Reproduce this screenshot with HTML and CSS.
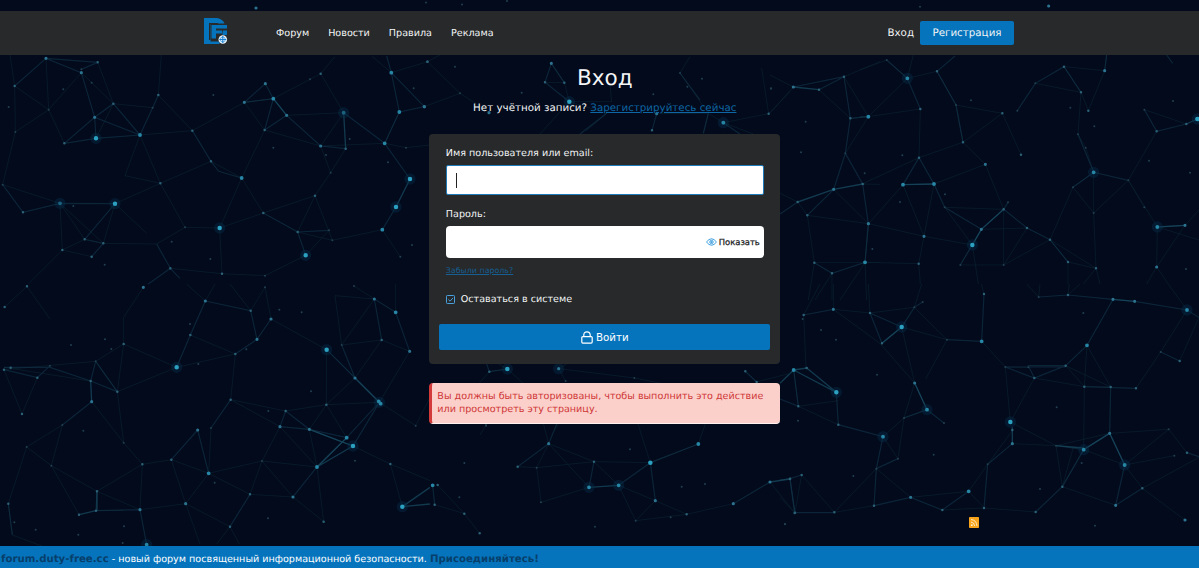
FILE: index.html
```html
<!DOCTYPE html>
<html lang="ru">
<head>
<meta charset="utf-8">
<title>Вход</title>
<link rel="stylesheet" href="styles.css">
</head>
<body>
<svg class="network" viewBox="0 0 1199 568" aria-hidden="true">
  <g transform="scale(.33333)">
    <path class="edge faint" d="M30 165L44 258L46 396L8 554M46 396L146 329L138 175M146 329L244 218M146 329L193 430M44 258L146 329M244 218L340 311L293 187M340 311L458 323M340 311L288 415M475 285L577 392L733 307M484 165L475 285M420 405L577 392M420 405L375 527L481 550L420 405M481 550L633 484M481 550L555 682L470 732L310 730M555 682L659 684L790 639M659 684L725 534L790 639M659 684L666 821M725 534L794 390L733 307M794 390L962 438M733 307L820 296L962 221L1031 338L860 346M962 221L1005 170M1031 338L962 438L992 518L945 587L893 696M945 587L997 721L893 696M790 639L945 587M962 438L1154 430L1198 336M1154 430L1218 443L1290 435M1037 446L992 518M1174 218L1283 185M1174 218L1115 168M1147 689L1201 770M997 721L1147 689M917 766L987 691M917 766L795 827L666 821L511 805M180 610L187 750L85 852M187 750L275 770M187 750L254 718L180 610L310 730L345 611M345 611L481 550M8 554L180 610M345 611L440 700M725 534L633 484"/>
    <path class="edge" d="M44 258L138 175L244 218L284 352L420 405L340 311L284 352L193 430M138 175L293 187L244 208M180 610L345 611L254 718L310 730L275 770M8 554L69 637L180 610M193 430L288 415L420 405L458 323L475 285M284 352L288 415M577 392L633 484L656 514L725 534M733 307L796 251L820 296L860 346L962 438L1037 446M733 307L820 296L794 390L860 346M1031 338L1154 430M790 639L893 696L917 766M893 696L987 691M470 732L511 805L445 852M511 805L540 835M1160 168L1174 218L1198 336L1154 430L1230 537M1198 336L1273 320L1174 218M1147 689L1188 621"/>
    <path class="edge bright" d="M820 296L860 346M1031 338L1037 446M1230 537L1188 621"/>
    <path class="node dim" d="M26 321h0M190 268h0M458 323h0M275 248h0M244 208h0M146 329h0M46 396h0M220 618h0M515 725h0M631 777h0M314 794h0M820 443h0M930 238h0M1049 417h0M1164 487h0M1241 265h0M1236 735h0M978 465h0M8 554h0M555 682h0M987 691h0M997 721h0M795 827h0M1201 770h0M992 518h0M1218 443h0M640 285h0"/>
    <path class="node small" d="M44 258h0M293 187h0M340 311h0M193 430h0M475 285h0M577 392h0M633 484h0M481 550h0M69 637h0M254 718h0M310 730h0M187 750h0M275 770h0M511 805h0M666 821h0M790 639h0M893 696h0M945 587h0M794 390h0M962 221h0M1037 446h0M1283 185h0"/>
    <path class="node medium" d="M138 175h0M244 218h0M284 352h0M796 251h0M860 346h0M962 438h0M768 24h0M1273 320h0M733 307h0"/>
    <path class="node large" d="M180 610h0M420 405h0M725 534h0M820 296h0M1031 338h0M1174 218h0M1198 336h0M1154 430h0M1147 689h0"/>
    <path class="halo" d="M180 610h0M288 415h0M345 611h0M659 684h0M917 766h0M1031 338h0M1230 537h0M1188 621h0"/>
    <path class="node huge" d="M288 415h0M345 611h0M659 684h0M917 766h0M1230 537h0M1188 621h0"/>
  </g>
  <g transform="translate(860 0) scale(.33333)">
    <path class="edge faint" d="M80 180L0 210M80 180L142 235L160 165M142 235L25 350L181 327L177 473L0 555M231 214L288 315L309 427L177 473M231 214L142 235M288 315L427 340L483 464M309 427L376 493L222 552M376 493L431 628M427 340L309 427M526 250L663 277L685 332M612 200L663 277L654 403M612 200L734 212L740 165M734 212L685 332M654 403L677 443L701 517L639 562L701 639L805 541M639 562L570 719M701 517L701 639L708 805M570 719L708 805M853 329L979 372M890 394L805 541L892 681L890 801L975 676L1017 630M805 541L853 622M129 554L26 671L15 787L176 791L192 709L129 554M222 552L192 709L337 735L364 688M254 622L337 735L301 795L431 795L501 684M431 628L431 795L570 719L624 786L708 805L670 852M624 786V852M708 805L720 852M501 684L364 688M26 671L192 709M892 681L1017 720M890 801L860 852M890 801L925 852M337 735L355 852M254 622L431 628M176 791L181 852"/>
    <path class="edge" d="M80 180L142 235L181 327M231 214L285 168M231 214L288 315L309 427M472 332L526 250L612 200L663 277M740 165L734 212M654 403L701 517L805 541M701 517L639 562M853 329L890 394L979 372M920 165L938 190M177 473L129 554L222 552L254 622L364 688L301 795M177 473L222 552M364 688L431 628L501 684L570 719L624 786M444 607L431 628M892 681L975 676M25 350H0"/>
    <path class="edge bright" d="M129 554L222 552M979 372L1012 357M337 735L364 688L431 628M892 681L975 676"/>
    <path class="node dim" d="M180 20h0M333 301h0M631 323h0M703 379h0M939 303h0M867 482h0M990 518h0M255 583h0M120 606h0M80 180h0M472 332h0M526 250h0M654 403h0M677 443h0M639 562h0M805 541h0M853 329h0M254 622h0M444 607h0M288 315h0M431 795h0M301 795h0M701 639h0M127 466h0M853 622h0M978 807h0M10 552h0"/>
    <path class="node small" d="M231 214h0M181 327h0M427 340h0M309 427h0M177 473h0M612 200h0M663 277h0M685 332h0M483 464h0M890 394h0M501 684h0M570 719h0M624 786h0M708 805h0M176 791h0M26 671h0M431 628h0M979 372h0"/>
    <path class="node medium" d="M25 350h0M376 493h0M734 212h0M364 688h0M192 709h0M15 787h0M975 676h0M890 801h0M566 18h0"/>
    <path class="halo" d="M142 235h0M337 735h0M892 681h0M701 517h0M1012 357h0"/>
    <path class="node large" d="M142 235h0M129 554h0M222 552h0M701 517h0M892 681h0"/>
    <path class="node huge" d="M337 735h0M1012 357h0"/>
  </g>
  <g transform="translate(0 284) scale(.33333)">
    <path class="edge faint" d="M81 7L150 105M81 7L14 69M430 10L371 100V180L530 250L352 323L287 232L12 257L66 390L112 281M287 232L371 180M352 323L371 476L427 541L291 622M275 353L371 476M187 423L154 545L237 692M187 423L80 489L25 659L37 753L125 786M80 489L154 545L291 622L420 677L427 541L514 527M514 527L557 659L600 780M557 659L626 568L786 531L840 428M557 659L420 677M557 659L690 728L650 780M690 728L718 780M514 527L626 568L750 631L879 639L971 713L951 549L786 531L750 631M786 531L879 639M840 428L951 549L928 436L1059 486L1171 540L1290 590M1171 540L1207 668M979 362L928 436M979 362L1040 461M979 362L1138 355L1247 425L1290 340M692 347L857 381L979 362L1065 282M692 347L840 428M692 347L706 210L530 250M706 210L571 153M371 180L352 323M633 432L626 568M813 105L980 197L979 362M980 197L1065 282L1145 168L1229 202L1138 355M1025 183L1145 168M1025 183L1005 35L1123 45M1025 183L1123 45M1187 85V0M616 51L645 0M616 51L560 0M752 80L690 0M752 80L795 10L813 105M1062 6L1123 45M272 291L12 250M288 680L370 680"/>
    <path class="edge" d="M616 51L571 153L530 250M616 51L752 80L771 166L813 105M771 166L706 210M692 347L633 432M593 438L514 527M593 438L626 568M12 250H150L272 291L352 323M12 257L112 281L150 245M287 232L272 291M287 232L352 323M275 353L187 423M840 428L857 381L928 436L1040 461L1138 355L1065 282L980 197M1065 282L1025 183M951 549L1040 461M1123 45L1187 85L1229 202M1123 45L1145 168M840 428L928 436L1059 486L1138 355M951 549L879 639M690 728L750 631M291 622L288 680M288 680L420 677L440 782M25 659L37 753"/>
    <path class="edge bright" d="M275 353L272 291M951 549L1059 486M1040 461L951 549M1207 668L1290 610M1207 668L1290 660M237 692L288 680M291 622V680M928 436L1059 486M1138 355L1065 282"/>
    <path class="node dim" d="M213 183h0M315 166h0M334 195h0M595 240h0M739 196h0M838 77h0M570 120h0M905 85h0M107 737h0M43 715h0M235 752h0M368 777h0M372 727h0M804 703h0M644 596h0M805 381h0M1065 530h0M187 423h0M154 545h0M80 489h0M371 476h0M633 432h0M786 531h0M1062 6h0M1247 425h0M1025 183h0M150 245h0M287 232h0M933 322h0M250 440h0M795 10h0"/>
    <path class="node small" d="M81 7h0M14 69h0M12 257h0M32 251h0M112 281h0M66 390h0M371 180h0M272 291h0M352 323h0M571 153h0M706 210h0M752 80h0M692 347h0M514 527h0M427 541h0M291 622h0M288 680h0M237 692h0M25 659h0M690 728h0M750 631h0M857 381h0M979 362h0M971 713h0M1145 168h0M1171 540h0"/>
    <path class="node medium" d="M430 10h0M616 51h0M813 105h0M771 166h0M275 353h0M593 438h0M420 677h0M557 659h0M879 639h0M928 436h0M840 428h0M1065 282h0M1123 45h0M1229 202h0"/>
    <path class="halo" d="M530 250h0M980 197h0M1059 486h0M1138 355h0M1207 668h0M440 782h0"/>
    <path class="node large" d="M626 568h0M951 549h0M1040 461h0M1136 352h0M1142 359h0M1187 85h0M440 782h0"/>
    <path class="node huge" d="M530 250h0M980 197h0M1059 486h0M1207 668h0"/>
  </g>
  <g transform="translate(780 284) scale(.33333)">
    <path class="edge faint" d="M160 76V0M160 76L270 87L265 0M71 93L120 0M71 93L78 250M160 76L300 178L404 297M270 87L403 70L425 0M403 70L501 167L437 285M365 129L501 167M365 129L404 297L372 402L309 458M605 172L676 249L691 414L763 282M604 0L612 30M676 249L745 250M776 39L780 0M776 39L740 0M864 33L868 0M864 33L900 0M1165 0L1221 78L1142 204M1199 231L1257 100M1142 204L1068 313M921 184L913 308L857 245L992 309L921 184M992 309L913 308L911 497M763 282L913 308M691 414L828 485M697 479L828 485L847 608M880 490L847 608L911 497L1034 543L1087 613L1257 520M1034 543L1183 515M989 448L1166 436L1221 506M989 448L828 485M847 608L1007 664M1087 613L1215 708M1034 543L1166 436M566 622L392 640M566 622L623 541L697 440M566 622L612 672L767 684M487 678L612 672M289 554L163 685L65 573L45 686L0 640M289 554L392 640M372 402L354 524L309 458M372 402L441 377M41 258L55 367L175 350M55 367L175 422M163 685L282 665"/>
    <path class="edge" d="M71 93L160 76M270 87L365 129M428 54L403 70L365 129L306 178L270 87M501 167L605 172L612 30M676 249L763 282L857 245H745L763 282M676 249H857M857 245L921 184L999 46L1064 52L1221 78L1257 100M776 39L864 33L999 46M1142 204L1199 231M913 308L1068 313M992 309L989 448L1034 543L1007 664L1087 613M169 325L175 422L309 458L289 554L282 665L392 640L487 678L566 622M354 524L289 554M372 402L441 377L492 417M404 297L441 377M612 672L623 541L697 479M767 684L847 608L911 497M45 686H163M0 588L30 584L65 573M30 584L45 686M41 258L55 367L0 345M989 448L911 497L828 485M1221 506L1257 518"/>
    <path class="edge bright" d="M365 129L306 178M0 298L41 258L80 252L169 325M41 258L169 325M404 297L441 377M697 479V430M911 497L989 448L1034 543M828 485L911 492M999 46L1064 52"/>
    <path class="node dim" d="M68 105h0M123 138h0M168 167h0M910 87h0M54 410h0M220 576h0M830 370h0M1183 515h0M461 512h0M372 402h0M354 524h0M492 417h0M289 554h0M623 541h0M428 54h0M403 70h0M501 167h0M676 249h0M745 250h0M776 39h0M1142 204h0M1166 436h0M291 272h0M15 720h0M945 725h0M905 537h0M780 615h0M828 485h0"/>
    <path class="node small" d="M71 93h0M270 87h0M306 178h0M612 30h0M864 33h0M763 282h0M857 245h0M913 308h0M992 309h0M1068 313h0M1199 231h0M80 252h0M55 367h0M175 422h0M65 573h0M30 584h0M45 686h0M163 685h0M282 665h0M487 678h0M612 672h0M767 684h0M847 608h0M1087 613h0M1221 506h0M697 438h0"/>
    <path class="node medium" d="M160 76h0M404 297h0M392 640h0M1064 52h0M999 46h0M989 448h0M697 479h0M1007 664h0M1215 708h0"/>
    <path class="halo" d="M365 129h0M169 325h0M309 458h0M441 377h0M691 414h0M1221 78h0M1034 543h0M911 497h0"/>
    <path class="node large" d="M605 172h0M921 184h0M41 258h0M441 377h0M309 458h0M566 622h0M911 497h0M1034 543h0M1221 78h0"/>
    <path class="node huge" d="M365 129h0M169 325h0M691 414h0"/>
  </g>
  <g transform="translate(430 420) scale(.33333)">
    <path class="edge faint" d="M340 10L356 71L320 143L333 247L477 202M356 71L492 125L661 128L620 0M492 125L566 196L676 242L770 283L910 251M566 196L617 302L770 283M617 302L676 242M320 143L492 125M263 140L320 143M356 71L477 202M661 128L805 72L830 0M23 195L103 281L149 340M14 254L103 281M1094 279L1020 186"/>
    <path class="edge" d="M385 0L356 71L263 140M492 125L477 202M566 196L661 128L676 242M661 128L805 72M910 251L1020 186M8 196L14 254M1080 177L1094 279"/>
    <path class="edge bright" d="M477 202L566 196M1020 186L1080 177"/>
    <path class="node dim" d="M168 15h0M103 129h0M88 232h0M825 192h0M755 200h0M600 88h0M1065 313h0M320 143h0M333 247h0M617 302h0M722 292h0M495 320h0"/>
    <path class="node small" d="M263 140h0M492 125h0M770 283h0M103 281h0M149 340h0M14 254h0M23 195h0M1080 177h0M1094 279h0"/>
    <path class="node medium" d="M356 71h0M676 242h0M910 251h0M1020 186h0"/>
    <path class="halo" d="M477 202h0M566 196h0"/>
    <path class="node large" d="M477 202h0M566 196h0M805 72h0M8 196h0"/>
    <path class="node huge" d="M661 128h0"/>
  </g>
  <g transform="translate(420 55) scale(.33333)">
    <path class="edge faint" d="M22 20L120 115L205 170M120 115L13 155M22 20L60 0M394 25L433 83L448 140M375 82L433 83M448 140L575 140L570 90M448 140L560 175L498 228M448 140L360 237M780 54L865 175L850 235M780 54L810 5M865 175L910 203L1046 176L1110 110M1046 176L1025 40M910 203L1000 237M710 176L865 175"/>
    <path class="edge" d="M394 25L375 82L448 140M394 25L433 83M710 176L696 226M865 175L850 235M780 54L840 135M560 175L480 237M910 203L960 237"/>
    <path class="node dim" d="M105 35h0M305 113h0M846 71h0M700 118h0M1053 100h0M780 54h0M120 115h0M802 95h0"/>
    <path class="node small" d="M22 20h0M375 82h0M433 83h0M696 226h0M1046 176h0"/>
    <path class="halo" d="M448 140h0M910 203h0"/>
    <path class="node medium" d="M13 155h0M394 25h0M710 176h0M207 173h0"/>
    <path class="node large" d="M910 203h0"/><path class="node huge" d="M448 140h0"/>
  </g>
  <g transform="translate(770 50) scale(.33333)">
    <path class="edge faint" d="M70 111L0 75M70 111L0 190M222 80L330 35M147 119L241 205L295 200L222 80M295 200L226 310M191 418L295 521L285 637L330 637M112 496L133 638L115 750M133 638H285L210 750M186 670V750M186 670L135 750M278 402L330 403M83 456L30 430M83 456L112 496L295 521M285 637L290 750"/>
    <path class="edge" d="M222 80L241 205L226 310L191 418L112 496M226 310L278 402L295 521L285 637L186 670L133 638M147 119L222 80L70 111M83 456L30 492M241 205L295 200"/>
    <path class="edge bright" d="M70 111L147 119M83 456L191 418L278 402"/>
    <path class="node dim" d="M93 307h0M284 370h0M307 597h0M107 215h0M3 116h0M226 310h0"/>
    <path class="node small" d="M222 80h0M147 119h0M241 205h0M278 402h0M83 456h0M112 496h0M133 638h0M186 670h0"/>
    <path class="node medium" d="M70 111h0M191 418h0M295 521h0"/>
    <path class="node large" d="M295 200h0M285 637h0"/>
  </g>
  <g transform="translate(420 310) scale(.33333)">
    <path class="edge faint" d="M262 177L208 185M208 185L160 240M262 177L310 220M416 176L643 204L800 235M416 176L440 162M976 184L1010 216L1110 190M262 177L235 162M416 176L437 213M415 342L395 375M198 345L180 375"/>
    <path class="edge" d="M208 185L262 177M976 184L1010 216M208 185L200 162"/>
    <path class="node dim" d="M437 213h0M198 347h0M643 204h0"/>
    <path class="node small" d="M208 185h0M976 184h0M1010 216h0"/>
    <path class="halo" d="M262 177h0M416 176h0"/>
    <path class="node medium" d="M416 176h0"/><path class="node huge" d="M262 177h0"/>
  </g>
  <path class="node dim thin" d="M426 2.500h0M462 4.500h0M507 1h0"/>
</svg>

<div class="page">
  <header class="header">
    <a class="logo" href="#">
      <svg viewBox="0 0 24 27" width="24" height="27">
        <path fill="#0674bd" d="M0 0H13Q19 1 20.500 5.500H6.500V23.500H15.500V26H0Z"/>
        <path fill="#0674bd" d="M7.500 7H23V10.500H12V12.500H18V15.500H12V20.500H7.500Z"/>
        <path fill="#0674bd" d="M19 12.500H23V17H18.500V14Z"/>
        <path fill="#27292a" d="M5 5H14V6.300H6.300V22H5Z"/>
        <circle cx="18.800" cy="21.500" r="4.300" fill="#e6f2fb"/>
        <circle cx="18.800" cy="21.500" r="2.500" fill="none" stroke="#4ba4e4" stroke-width=".9"/>
        <path d="M18.800 18v7M15.300 21.500h7" stroke="#187fd0" stroke-width="1.100"/>
      </svg>
    </a>
    <nav class="nav"><a href="#">Форум</a><a href="#">Новости</a><a href="#">Правила</a><a href="#">Реклама</a></nav>
    <div class="account"><a class="sign-in" href="#">Вход</a><a class="register" href="#">Регистрация</a></div>
  </header>

  <main class="main">
    <h1 class="title">Вход</h1>
    <p class="subtitle">Нет учётной записи? <a class="link" href="#">Зарегистрируйтесь сейчас</a></p>
    <form class="card">
      <div class="fields">
        <label class="label">Имя пользователя или email:</label>
        <div class="input focused"><span class="caret"></span></div>
        <label class="label">Пароль:</label>
        <div class="input password">
          <svg viewBox="0 0 11 8" width="11" height="8" fill="none" stroke="#3d9fe0"><path d="M.5 4Q5.500-2.500 10.500 4Q5.500 10.500 .5 4Z"/><circle cx="5.500" cy="4" r="1.700"/><circle cx="5.500" cy="4" r=".6" fill="#3d9fe0"/></svg>
          <span class="show">Показать</span>
        </div>
        <a class="link forgot" href="#">Забыли пароль?</a>
        <div class="remember">
          <svg viewBox="0 0 9 9" width="9" height="9" fill="none" stroke="#48a0dc"><rect x=".5" y=".5" width="8" height="8" rx=".8"/><path d="M2.300 4.500L4 6.200L7 2.900"/></svg>
          <span>Оставаться в системе</span>
        </div>
      </div>
      <button class="submit" type="button">
        <svg viewBox="0 0 12 13" width="12" height="13" fill="none" stroke="#fff" stroke-width="1.200"><rect x=".8" y="5.600" width="10.400" height="6.500" rx="1"/><path d="M2.800 5.500V4Q2.800 .8 6 .8T9.200 4V5.500"/></svg>
        <span>Войти</span>
      </button>
    </form>
    <div class="alert">Вы должны быть авторизованы, чтобы выполнить это действие<br>или просмотреть эту страницу.</div>
  </main>

  <footer class="footer">
    <a class="rss" href="#"><svg viewBox="0 0 10 11" width="10" height="11"><rect width="10" height="11" rx=".7" fill="#f7a31c"/><g fill="none" stroke="#fff3d6" stroke-width=".9"><path d="M2 2.500Q7.500 3 8 9M2 5Q5.200 5.500 5.700 9"/></g><circle cx="2.800" cy="8.200" r=".9" fill="#fff3d6"/></svg></a>
  </footer>
  <div class="notice"><a href="#">forum.duty-free.cc</a> <span>- новый форум посвященный информационной безопасности.</span> <a href="#">Присоединяйтесь!</a></div>
</div>
</body>
</html>
```
FILE: styles.css
```css
* { box-sizing: border-box; }
body {
  margin: 0;
  background: #020a1c;
  color: #f4f5f6;
  font-family: "DejaVu Sans", sans-serif;
  font-size: 9.6px;
  text-rendering: geometricPrecision;
  overflow: hidden;
}
a { color: inherit; text-decoration: none; }
svg { display: block; flex: none; }

.network { position: absolute; top: 0; left: 0; width: 1199px; height: 568px; }
.edge { fill: none; stroke: #14354a; stroke-width: 3.6; opacity: .62; }
.edge.faint { stroke: #0b2230; stroke-width: 3; opacity: .65; }
.edge.bright { stroke: #1b5368; stroke-width: 4; opacity: .65; }
.node { fill: none; stroke: #2b6076; stroke-width: 7.500; stroke-linecap: round; }
.node.dim { stroke: #213f50; stroke-width: 6; }
.node.medium { stroke: #2c7390; stroke-width: 9.500; }
.node.large { stroke: #2786a5; stroke-width: 11.5; }
.node.huge { stroke: #2ba0c0; stroke-width: 13.5; }
.node.dim.thin { stroke-width: 2; }
.halo { fill: none; stroke: #06304b; stroke-width: 34; stroke-linecap: round; opacity: .42; }

.page { position: relative; display: flex; flex-direction: column; height: 568px; padding-top: 11px; }
.header { display: flex; align-items: center; height: 44px; flex: none; padding: 0 185px 0 204px; background: #27292a; }
.logo { width: 72px; margin-top: -3px; }
.nav { display: flex; gap: 19px; font-size: 9.6px; }
.account { display: flex; align-items: center; gap: 6px; margin-left: auto; font-size: 10.3px; }
.register { display: flex; align-items: center; justify-content: center; width: 94px; height: 24px; border-radius: 2px; background: #0674bd; }

.main { display: flex; flex-direction: column; width: 351px; margin-left: 429.300px; }
.title { margin: 11px 0 0; height: 26px; line-height: 26px; font-size: 21.6px; font-weight: 400; text-align: center; }
.subtitle { margin: 8px 0 0; height: 16px; line-height: 16px; font-size: 10.3px; text-align: center; white-space: nowrap; }
.link { color: #0e67a4; text-decoration: underline; }
.card { height: 230px; margin-top: 18px; padding: 12px 10px 14px; border-radius: 4px; background: #27292a; display: flex; flex-direction: column; }
.fields { display: flex; flex-direction: column; padding: 0 6.500px; }
.label { height: 14px; line-height: 15px; }
.input { display: flex; align-items: center; height: 30px; margin: 5px 0 12px; border-radius: 2px; background: #fff; }
.focused { border: 1px solid #1e79b8; padding-left: 9px; }
.caret { width: 1px; height: 15px; background: #222; }
.password { height: 32px; justify-content: flex-end; gap: 2px; margin-bottom: 6px; padding-right: 4px; border-radius: 4px; }
.show { color: #202122; font-size: 8.4px; -webkit-text-stroke: .25px #202122; }
.forgot { height: 12px; line-height: 13px; font-size: 7.900px; color: #155f92; align-self: flex-start; }
.remember { display: flex; align-items: center; gap: 6px; height: 14px; margin-top: 16px; }
.submit { display: flex; align-items: center; justify-content: center; gap: 3px; height: 26px; margin: auto 0 0; padding: 0; border: 0; border-radius: 2px; background: #0674bd; color: #fff; font-family: inherit; font-size: 10.300px; }
.alert { height: 41px; margin-top: 19px; padding: 7px 5px; border-left: 3px solid #d33b3b; border-bottom: 1px solid #fff1ef; border-radius: 4px; background: #fbd0ca; color: #cf3637; line-height: 13.300px; white-space: nowrap; }

.footer { display: flex; justify-content: flex-end; margin-top: auto; padding-right: 220px; }
.notice { flex: none; height: 22px; margin-top: 18px; padding-left: 1px; line-height: 27px; background: #0674bd; color: #fff; font-size: 9.6px; white-space: nowrap; }
.notice a { color: #063f6b; font-size: 10.2px; font-weight: 700; }
```
